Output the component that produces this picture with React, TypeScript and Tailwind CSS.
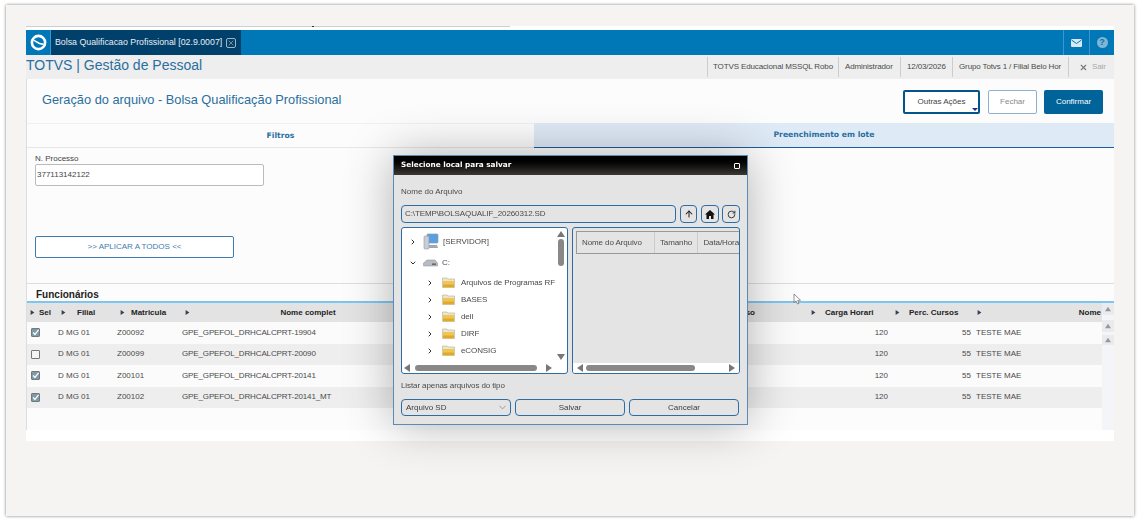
import { ArrowUp, ChevronDown, ChevronRight, RotateCw, X } from "lucide-react";

const rows = [
  { checked: true, mat: "Z00092", nome: "GPE_GPEFOL_DRHCALCPRT-19904" },
  { checked: false, mat: "Z00099", nome: "GPE_GPEFOL_DRHCALCPRT-20090" },
  { checked: true, mat: "Z00101", nome: "GPE_GPEFOL_DRHCALCPRT-20141" },
  { checked: true, mat: "Z00102", nome: "GPE_GPEFOL_DRHCALCPRT-20141_MT" },
];

const gridCols = "grid grid-cols-[30px_59px_65px_250px_376px_84px_82px_129px]";

// Triangulo usado no cabecalho da tabela e nas barras de rolagem
function Tri({ dir, className }: { dir: "up" | "down" | "left" | "right"; className?: string }) {
  const points = {
    up: "4,1 8,7 0,7",
    down: "0,1 8,1 4,7",
    left: "7,0 7,8 1,4",
    right: "1,0 7,4 1,8",
  }[dir];
  return (
    <svg width="8" height="8" viewBox="0 0 8 8" className={className}>
      <polygon points={points} fill="currentColor" />
    </svg>
  );
}

function HeadCell({ label, className }: { label: string; className?: string }) {
  return (
    <div className={`flex items-center ${className ?? ""}`}>
      <Tri dir="right" className="w-[5px] h-[5px] text-gray-700 shrink-0" />
      {label}
    </div>
  );
}

function CheckBox({ checked }: { checked: boolean }) {
  return (
    <span className="w-[9px] h-[9px] rounded-[1px] border border-[#777] bg-[#f4f4f4] flex items-center justify-center">
      {checked && (
        <svg width="9" height="9" viewBox="0 0 9 9">
          <rect x="0" y="0" width="9" height="9" fill="#7d9aa8" />
          <path d="M1.5 4.5 L3.8 7 L8.5 1" stroke="#fff" strokeWidth="1.6" fill="none" />
        </svg>
      )}
    </span>
  );
}

function Folder() {
  return (
    <svg width="13" height="11" viewBox="0 0 13 11" className="shrink-0">
      <path d="M0.5 2 L0.5 1 L5 1 L6 2 L12.5 2 L12.5 10.5 L0.5 10.5 Z" fill="#e9e4d4" stroke="#b9ad8c" strokeWidth="0.6" />
      <rect x="1" y="4" width="11" height="6.2" fill="#f0c550" />
      <rect x="1" y="7.5" width="11" height="2.7" fill="#dfa92e" />
    </svg>
  );
}

function TreeRow({ label }: { label: string }) {
  return (
    <div className="flex items-center h-[17px] pl-[24px]">
      <ChevronRight size={8} strokeWidth={3} className="text-[#333] shrink-0" />
      <span className="w-[8px] shrink-0" />
      <Folder />
      <span className="text-[8px] text-[#4a4a4a] tracking-[-0.1px] whitespace-nowrap ml-[6px]">{label}</span>
    </div>
  );
}

function ModalButton({ label }: { label: string }) {
  return (
    <button className="w-[110px] h-[17px] rounded-[4px] border border-[#2e6da4] bg-[#e4e4e4] text-[8px] text-[#3c3c3c]">
      {label}
    </button>
  );
}

function SaveDialog() {
  return (
    <div className="absolute left-[367px] top-[129px] w-[355px] h-[270px] flex flex-col border border-[#5a8ab5] shadow-[0_0_45px_rgba(0,0,0,0.3)] bg-[#e4e4e4]">
      <div className="h-[19px] shrink-0 bg-gradient-to-b from-[#000000] to-[#3d3935] flex items-center justify-between px-[7px]">
        <span className="font-['DejaVu_Sans'] font-bold text-[7.3px] text-white">Selecione local para salvar</span>
        <span className="w-[6px] h-[6px] border border-white rounded-[1px]" />
      </div>
      <div className="px-[7px] flex flex-col flex-1">
        <span className="text-[8px] text-[#4a4a4a] mt-[11px] leading-[12px]">Nome do Arquivo</span>
        <div className="flex items-center mt-[7px] h-[18px]">
          <div className="w-[275px] h-[18px] rounded-[4px] border border-[#2e6da4] flex items-center pl-[3px] text-[8px] tracking-[-0.1px] text-[#4a4a4a]">
            C:\TEMP\BOLSAQUALIF_20260312.SD
          </div>
          <div className="ml-[4px] w-[17px] h-[18px] rounded-[4px] border border-[#2e6da4] flex items-center justify-center">
            <ArrowUp size={10} strokeWidth={2.5} className="text-[#222]" />
          </div>
          <div className="ml-[4px] w-[18px] h-[18px] rounded-[4px] border border-[#2e6da4] flex items-center justify-center">
            <svg width="10" height="9" viewBox="0 0 10 9">
              <path d="M5 0 L10 4.5 L8.5 4.5 L8.5 9 L6 9 L6 6 L4 6 L4 9 L1.5 9 L1.5 4.5 L0 4.5 Z" fill="#111" />
            </svg>
          </div>
          <div className="ml-[3px] w-[18px] h-[18px] rounded-[4px] border border-[#2e6da4] flex items-center justify-center">
            <RotateCw size={9} strokeWidth={2.5} className="text-[#333]" />
          </div>
        </div>

        <div className="flex mt-[4px] h-[147px] gap-[4px]">
          {/* Arvore de pastas */}
          <div className="w-[167px] rounded-[3px] border border-[#2e6da4] bg-white flex flex-col overflow-hidden">
            <div className="flex flex-1 min-h-0">
              <div className="flex-1 min-w-0 overflow-hidden pt-[5px]">
                <div className="flex items-center h-[17px] pl-[7px]">
                  <ChevronRight size={8} strokeWidth={3} className="text-[#333] shrink-0" />
                  <svg width="17" height="17" viewBox="0 0 17 17" className="ml-[6px] shrink-0">
                    <rect x="4" y="1" width="11" height="9" rx="1" fill="#5aa0e0" stroke="#8a9cb0" strokeWidth="0.7" />
                    <rect x="1" y="3" width="5" height="13" rx="1" fill="#c9ced6" stroke="#8f98a5" strokeWidth="0.6" />
                    <path d="M6 12 L14 12 L15 15 L6 15 Z" fill="#9fa8b4" />
                  </svg>
                  <span className="ml-[3px] text-[8px] text-[#4a4a4a]">[SERVIDOR]</span>
                </div>
                <div className="flex items-center h-[22px] mt-[2px] pl-[7px]">
                  <ChevronDown size={8} strokeWidth={3} className="text-[#333] shrink-0" />
                  <svg width="15" height="8" viewBox="0 0 15 8" className="ml-[6px] shrink-0">
                    <path d="M0.5 4 L4 1 L12 1 L14.5 4 L14.5 7 L0.5 7 Z" fill="#b8bcc0" stroke="#8a8f94" strokeWidth="0.5" />
                    <rect x="9" y="4.5" width="4" height="1.3" fill="#555" />
                  </svg>
                  <span className="ml-[4px] text-[8px] text-[#4a4a4a]">C:</span>
                </div>
                <div>
                  <TreeRow label="Arquivos de Programas RF" />
                  <TreeRow label="BASES" />
                  <TreeRow label="dell" />
                  <TreeRow label="DIRF" />
                  <TreeRow label="eCONSIG" />
                </div>
              </div>
              <div className="w-[11px] mr-[1px] shrink-0 pt-[2px] flex flex-col items-center text-[#777]">
                <Tri dir="up" />
                <div className="w-[6px] h-[27px] mt-[1px] rounded-[3px] bg-[#888]" />
                <Tri dir="down" className="mt-auto mb-[1px]" />
              </div>
            </div>
            <div className="h-[11px] shrink-0 flex items-center pl-[1px] text-[#777]">
              <Tri dir="left" className="shrink-0" />
              <div className="w-[122px] h-[6px] ml-[4px] rounded-[3px] bg-[#888]" />
              <Tri dir="right" className="ml-[8px] shrink-0" />
            </div>
          </div>

          {/* Lista de arquivos */}
          <div className="w-[168px] rounded-[3px] border border-[#2e6da4] bg-[#e4e4e4] flex flex-col overflow-hidden">
            <div className="flex-1 pt-[3px] pl-[3px] overflow-hidden">
              <div className="h-[23px] flex items-center border-y border-l border-[#999] text-[8px] tracking-[-0.1px] text-[#4a4a4a] whitespace-nowrap">
                <span className="w-[78px] pl-[5px] h-full flex items-center border-r border-[#ccc]">Nome do Arquivo</span>
                <span className="w-[44px] h-full flex items-center justify-center border-r border-[#ccc]">Tamanho</span>
                <span className="pl-[5px]">Data/Hora</span>
              </div>
            </div>
            <div className="h-[10px] shrink-0 bg-white flex items-center pl-[3px] text-[#777]">
              <Tri dir="left" className="shrink-0" />
              <div className="w-[109px] h-[6px] ml-[2px] rounded-[3px] bg-[#888]" />
              <Tri dir="right" className="ml-[33px] shrink-0" />
            </div>
          </div>
        </div>

        <span className="text-[8px] text-[#4a4a4a] tracking-[-0.1px] mt-[6px] leading-[12px]">Listar apenas arquivos do tipo</span>
        <div className="flex items-center mt-[7px] gap-[4px]">
          <div className="w-[110px] h-[17px] rounded-[4px] border border-[#2e6da4] flex items-center justify-between pl-[4px] pr-[2px] text-[8px] text-[#3c3c3c]">
            Arquivo SD
            <ChevronDown size={11} strokeWidth={1.5} className="text-[#777]" />
          </div>
          <ModalButton label="Salvar" />
          <ModalButton label="Cancelar" />
        </div>
      </div>
    </div>
  );
}

export default function App() {
  return (
    <div className="w-[1140px] h-[522px] bg-white overflow-hidden font-['Liberation_Sans',Arial,sans-serif] pl-[6px] pt-[5px]">
      <div className="w-[1128px] h-[511px] bg-[#f5f4f2] shadow-[0_0_3px_rgba(0,0,0,0.5)] pl-[20px] pt-[21px]">
        <div className="relative w-[1088px] h-[415px] bg-white flex flex-col blur-[0.35px]">
          <div className="h-[4px] shrink-0">
            <div className="relative w-[484px] h-px bg-[#cfcfcf]">
              <span className="absolute left-[286px] top-0 w-[2px] h-px bg-[#333]" />
            </div>
          </div>

          {/* Barra azul */}
          <div className="h-[25px] shrink-0 bg-[#0078b8] flex">
            <div className="w-[25px] flex items-center justify-center border-r border-[#3b98cc]">
              <svg width="17" height="17" viewBox="0 0 17 17">
                <circle cx="8.5" cy="8.5" r="6.6" fill="none" stroke="#fff" strokeWidth="2.6" />
                <path d="M3.5 6.5 C6 6 8 11 13.5 10" fill="none" stroke="#fff" strokeWidth="1.6" />
              </svg>
            </div>
            <div className="w-[190px] bg-[#00406b] flex items-center pl-[4px] text-[8.8px] text-[#e8eef3] whitespace-nowrap">
              Bolsa Qualificacao Profissional [02.9.0007]
              <span className="ml-[4px] w-[10px] h-[10px] border border-[#9fb5c4] rounded-[2px] flex items-center justify-center">
                <X size={8} strokeWidth={2} className="text-[#9fb5c4]" />
              </span>
            </div>
            <div className="ml-auto flex">
              <div className="w-[27px] flex items-center justify-center border-x border-[#3b98cc]">
                <svg width="11" height="8" viewBox="0 0 11 8">
                  <rect width="11" height="8" rx="1" fill="#d9e9f3" />
                  <path d="M0.5 1 L5.5 4.5 L10.5 1" fill="none" stroke="#0078b8" strokeWidth="1" />
                </svg>
              </div>
              <div className="w-[24px] flex items-center justify-center">
                <span className="w-[11px] h-[11px] rounded-full bg-[#7fb5d5] text-[#0078b8] text-[9px] font-bold leading-[11px] text-center">?</span>
              </div>
            </div>
          </div>

          {/* Barra cinza */}
          <div className="h-[24px] shrink-0 bg-[#eeeeee] flex items-center">
            <span className="text-[14px] leading-[20px] mb-[4px] text-[#2b6f9f]">TOTVS | Gestão de Pessoal</span>
            <div className="ml-auto flex h-[20px] text-[8px] tracking-[-0.13px] text-[#4a4a4a] whitespace-nowrap">
              <div className="w-[131px] border-l border-[#ccc] flex items-center pl-[5px]">TOTVS Educacional MSSQL Robo</div>
              <div className="w-[62px] border-l border-[#ccc] flex items-center pl-[6px]">Administrador</div>
              <div className="w-[52px] border-l border-[#ccc] flex items-center pl-[6px]">12/03/2026</div>
              <div className="w-[116px] border-l border-[#ccc] flex items-center pl-[6px]">Grupo Totvs 1 / Filial Belo Hor</div>
              <div className="w-[46px] border-l border-[#ccc] flex items-center pl-[10px] text-[#aaa]">
                <X size={9} strokeWidth={3} className="text-[#777] mr-[4px]" />
                Sair
              </div>
            </div>
          </div>

          {/* Conteudo */}
          <div className="h-[351px] shrink-0 bg-[#fcfcfc] border-l border-[#ddd] flex flex-col">
            <div className="h-[44px] shrink-0 flex items-start pt-[11px] pl-[15px]">
              <span className="text-[12.8px] leading-[20px] text-[#2b6f9f]">Geração do arquivo - Bolsa Qualificação Profissional</span>
              <div className="ml-auto mr-[11px] flex text-[8px]">
                <button className="w-[77px] h-[24px] relative rounded-[2px] border-2 border-[#00558c] bg-white text-[#444]">
                  Outras Ações
                  <span className="absolute right-[0px] bottom-[1px] border-x-[3px] border-t-[3px] border-x-transparent border-t-[#1f2f9c]" />
                </button>
                <button className="w-[49px] h-[24px] ml-[8px] rounded-[2px] border border-[#8fb0cc] bg-white text-[#888]">Fechar</button>
                <button className="w-[59px] h-[24px] ml-[7px] rounded-[2px] bg-[#00639a] text-white">Confirmar</button>
              </div>
            </div>

            <div className="h-[25px] shrink-0 flex font-['DejaVu_Sans'] font-bold text-[7.7px] text-[#2b6f9f]">
              <div className="w-[507px] flex items-center justify-center border-b border-[#e6e6e6] border-t border-t-[#f0f0f0]">Filtros</div>
              <div className="flex-1 flex items-center justify-center bg-[#dfeaf7] border-b border-[#1d5c96]">Preenchimento em lote</div>
            </div>

            <div className="h-[136px] shrink-0 border-b border-[#ddd] pl-[8px] pt-[6px]">
              <div className="text-[8px] leading-[10px] text-[#444]">N. Processo</div>
              <div className="w-[229px] h-[22px] rounded-[2px] border border-[#bbb] bg-white flex items-center pl-[1px] pb-[1px] text-[8px] text-[#444]">377113142122</div>
              <button className="w-[199px] h-[22px] mt-[50px] rounded-[2px] border border-[#3f7cb0] bg-white text-[8px] text-[#3f7cb0] block">
                &gt;&gt; APLICAR A TODOS &lt;&lt;
              </button>
            </div>

            {/* Tabela */}
            <div className="h-[17px] shrink-0 pl-[9px] flex items-end text-[10px] leading-[13px] font-bold text-[#222]">Funcionários</div>
            <div className="h-[2px] shrink-0 bg-[#7cc6f0]" />
            <div className="flex flex-1">
              <div className="w-[1075px] flex flex-col text-[8px]">
                <div className={`${gridCols} h-[19px] shrink-0 bg-[#e3e3e3] font-bold text-[#222] whitespace-nowrap`}>
                  <HeadCell label="Sel" className="pl-[3px] gap-[4px]" />
                  <HeadCell label="Filial" className="pl-[4px] gap-[11px]" />
                  <HeadCell label="Matricula" className="pl-[4px] gap-[6px]" />
                  <div className="relative flex items-center justify-center pl-[4px]">
                    <Tri dir="right" className="absolute left-[4px] w-[5px] h-[5px] text-gray-700" />
                    Nome complet
                  </div>
                  <div className="flex items-center justify-end pr-[52px]">Processo</div>
                  <HeadCell label="Carga Horari" className="pl-[4px] gap-[9px]" />
                  <HeadCell label="Perc. Cursos" className="pl-[4px] gap-[9px]" />
                  <div className="relative flex items-center justify-end pr-[1px]">
                    <Tri dir="right" className="absolute left-[4px] w-[5px] h-[5px] text-gray-700" />
                    Nome
                  </div>
                </div>
                {rows.map((row, i) => (
                  <div key={row.mat} className={`${gridCols} h-[21.5px] shrink-0 items-center text-[#4a4a4a] ${i % 2 === 1 ? "bg-[#eeeeee]" : "bg-[#fbfbfb]"}`}>
                    <div className="pl-[4px]"><CheckBox checked={row.checked} /></div>
                    <div className="pl-[1px]">D MG 01</div>
                    <div className="pl-[1px]">{row.mat}</div>
                    <div className="pl-[1px] col-span-2 tracking-[-0.13px]">{row.nome}</div>
                    <div className="text-right pr-[3px]">120</div>
                    <div className="text-right pr-[2px]">55</div>
                    <div className="pl-[3px]">TESTE MAE</div>
                  </div>
                ))}
              </div>
              <div className="flex-1 bg-[#f3f5f8] text-[#999] flex flex-col items-center">
                <div className="h-[12px] w-full bg-[#e9ebee] flex items-center justify-center"><Tri dir="up" className="w-[6px] h-[6px]" /></div>
                <div className="h-[12px] w-full mt-[5px] bg-[#e9ebee] flex items-center justify-center"><Tri dir="up" className="w-[6px] h-[6px]" /></div>
                <div className="h-[10px] w-full mt-[3px] bg-[#e9ebee] flex items-center justify-center"><Tri dir="up" className="w-[6px] h-[6px]" /></div>
              </div>
            </div>
          </div>

          <SaveDialog />

          {/* Cursor do mouse */}
          <svg width="9" height="12" viewBox="0 0 9 12" className="absolute left-[767px] top-[267px]">
            <path d="M1 1 L1 9.5 L3 8 L4.5 11 L6 10.3 L4.7 7.5 L7.5 7.2 Z" fill="#fff" stroke="#666" strokeWidth="0.7" />
          </svg>
        </div>
      </div>
    </div>
  );
}
